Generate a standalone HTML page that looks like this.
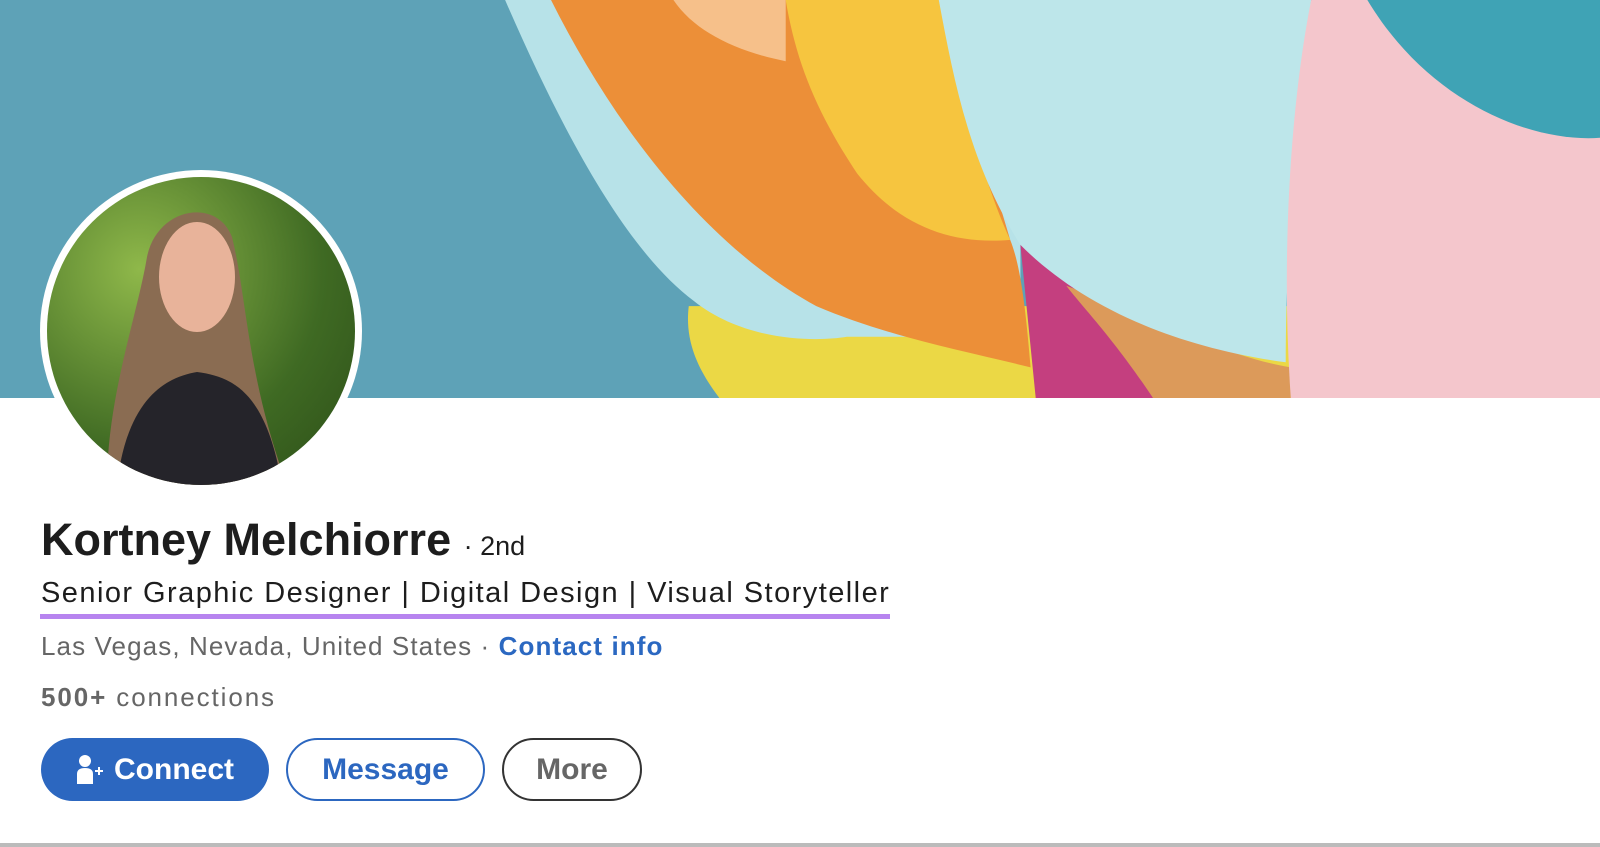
<!DOCTYPE html>
<html><head><meta charset="utf-8"><style>
body{margin:0;width:1600px;height:847px;background:#fff;position:relative;overflow:hidden;font-family:"Liberation Sans",Arial,sans-serif}
#banner{position:absolute;left:0;top:0;width:1600px;height:398px}
#av{position:absolute;left:40px;top:170px;width:322px;height:322px;border-radius:50%;background:#fff}
#av .in{position:absolute;left:7px;top:7px;width:308px;height:308px;border-radius:50%;overflow:hidden;background:radial-gradient(circle at 30% 30%,#8fb84a,#3f6a23 60%,#2c4d18)}
.t{position:absolute;white-space:nowrap}
.btn{position:absolute;top:738px;height:63px;border-radius:32px;box-sizing:border-box;font-weight:bold;font-size:30px;display:flex;align-items:center;justify-content:center}
</style></head><body>
<svg id="banner" viewBox="0 0 1568 390" preserveAspectRatio="none">
<rect width="1568" height="390" fill="#5ea2b7"/>
<path d="M675 300C670 340 690 370 705 390H1568V300Z" fill="#ebd845"/>
<path d="M1000 240L1060 240 1130 390H1015Z" fill="#c43f7f"/>
<path d="M1045 280C1100 300 1200 350 1265 360V390H1130C1090 330 1060 300 1045 280Z" fill="#dc9a5a"/>
<path d="M495 0C560 150 620 250 680 295C730 335 800 335 830 330L1000 330V0Z" fill="#b7e2e8"/>
<path d="M540 0C600 120 690 240 800 300C870 330 950 345 1010 360C1005 300 1000 260 990 235L920 0Z" fill="#ec8f38"/>
<path d="M660 0H770V60C720 50 680 30 660 0Z" fill="#f6c08a"/>
<path d="M770 0H920C940 80 960 170 990 235C930 240 880 220 840 170C800 110 780 60 770 0Z" fill="#f6c53f"/>
<path d="M920 0H1285C1270 120 1260 250 1260 355C1150 340 1060 300 1000 240C950 160 935 80 920 0Z" fill="#bde6ea"/>
<path d="M1285 0H1568V390H1265C1255 250 1265 100 1285 0Z" fill="#f4c6cc"/>
<path d="M1340 0H1568V135C1500 140 1400 100 1340 0Z" fill="#3fa3b5"/>
</svg>
<div id="av"><div class="in">
<svg width="308" height="308" viewBox="0 0 308 308">
<path d="M60 308C60 220 90 140 100 80C110 30 170 20 185 60C200 120 200 200 240 308Z" fill="#8a6c52"/>
<ellipse cx="150" cy="100" rx="38" ry="55" fill="#e8b39a"/>
<path d="M70 308C80 220 120 200 150 195C190 200 220 220 235 308Z" fill="#25242a"/>
</svg></div></div>
<div class="t" style="left:41px;top:514px;font-size:45px;font-weight:bold;color:#1d1d1d">Kortney Melchiorre <span style="font-size:27px;font-weight:normal">· 2nd</span></div>
<div class="t" style="left:41px;top:577px;font-size:29px;color:#1d1d1d;letter-spacing:1.45px">Senior Graphic Designer | Digital Design | Visual Storyteller</div>
<div style="position:absolute;left:40px;top:614px;width:850px;height:5px;background:#b784ef"></div>
<div class="t" style="left:41px;top:631px;font-size:26px;color:#666;letter-spacing:1.1px">Las Vegas, Nevada, United States · <b style="color:#2b68c1">Contact info</b></div>
<div class="t" style="left:41px;top:682px;font-size:26px;color:#666;letter-spacing:1.9px"><b>500+</b> connections</div>
<div class="btn" style="left:41px;width:228px;background:#2c67c0;color:#fff"><svg width="30" height="32" viewBox="0 0 30 32" style="margin-right:8px"><circle cx="9" cy="7" r="6" fill="#fff"/><path d="M1 30V20Q1 14 9 14Q17 14 17 20V30Z" fill="#fff"/><path d="M23 13v8M19 17h8" stroke="#fff" stroke-width="2"/></svg>Connect</div>
<div class="btn" style="left:286px;width:199px;border:2px solid #2c67c0;color:#2c67c0">Message</div>
<div class="btn" style="left:502px;width:140px;border:2px solid #333;color:#666">More</div>
<div style="position:absolute;left:0;top:843px;width:1600px;height:4px;background:#bbb"></div>
</body></html>
